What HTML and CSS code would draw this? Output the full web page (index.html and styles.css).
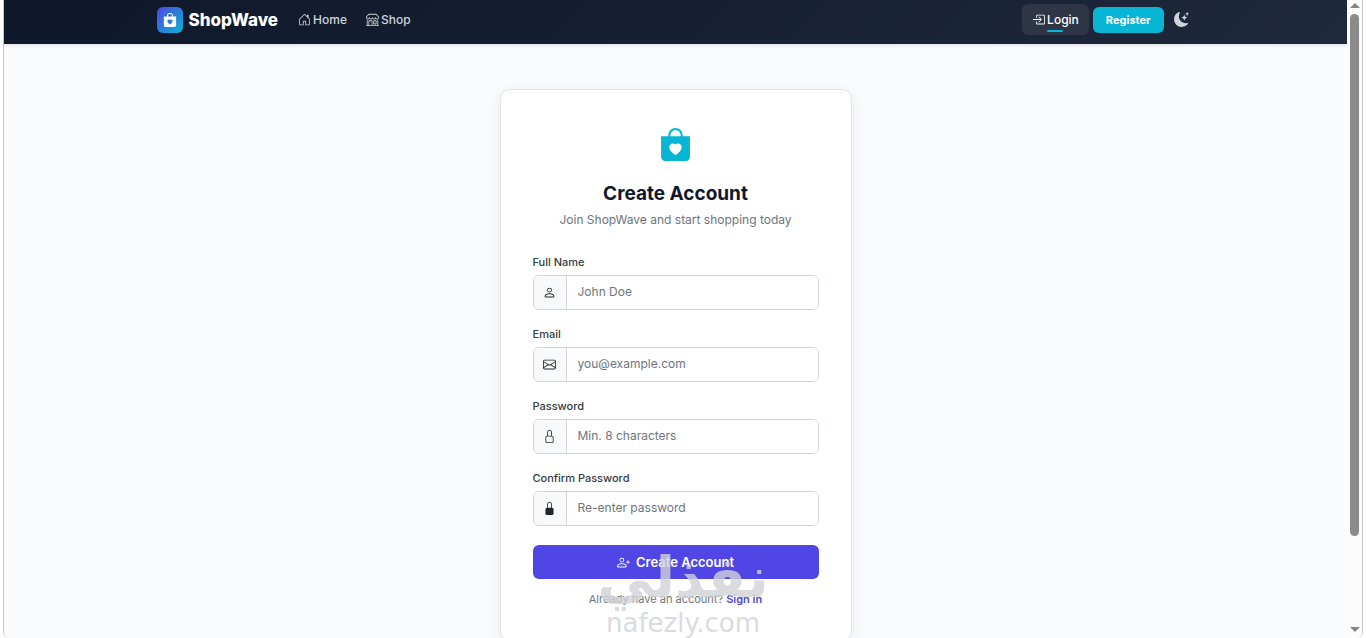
FILE: index.html
```
<!DOCTYPE html>
<html lang="en">
<head>
    <meta charset="UTF-8">
    <meta name="viewport" content="width=device-width, initial-scale=1.0">
    <title>Create Account - ShopWave</title>
    <link rel="stylesheet" href="styles.css">
</head>
<body>
    <div class="window">
        <div class="page">
            <nav class="navbar">
                <div class="container">
                    <a href="#" class="brand">
                        <span class="brand-icon">
                            <svg viewBox="0 0 16 16"><path d="M11.5 4v-.5a3.5 3.5 0 1 0-7 0V4H1v10a2 2 0 0 0 2 2h10a2 2 0 0 0 2-2V4zM8 1a2.5 2.5 0 0 1 2.5 2.5V4h-5v-.5A2.5 2.5 0 0 1 8 1m0 6.993c1.664-1.711 5.825 1.283 0 5.132-5.825-3.85-1.664-6.843 0-5.132"/></svg>
                        </span>
                        ShopWave
                    </a>
                    <div class="nav-links">
                        <a href="#" class="nav-link">
                            <svg viewBox="0 0 16 16"><path d="M8.354 1.146a.5.5 0 0 0-.708 0l-6 6A.5.5 0 0 0 1.5 7.5v7a.5.5 0 0 0 .5.5h4.5a.5.5 0 0 0 .5-.5v-4h2v4a.5.5 0 0 0 .5.5H14a.5.5 0 0 0 .5-.5v-7a.5.5 0 0 0-.146-.354L13 5.793V2.5a.5.5 0 0 0-.5-.5h-1a.5.5 0 0 0-.5.5v1.293zM2.5 14V7.707l5.5-5.5 5.5 5.5V14H10v-4a.5.5 0 0 0-.5-.5h-3a.5.5 0 0 0-.5.5v4z"/></svg>
                            Home
                        </a>
                        <a href="#" class="nav-link">
                            <svg viewBox="0 0 16 16"><path d="M2.97 1.35A1 1 0 0 1 3.73 1h8.54a1 1 0 0 1 .76.35l2.609 3.044A1.5 1.5 0 0 1 16 5.37v.255a2.375 2.375 0 0 1-4.25 1.458A2.37 2.37 0 0 1 9.875 8 2.37 2.37 0 0 1 8 7.083 2.37 2.37 0 0 1 6.125 8a2.37 2.37 0 0 1-1.875-.917A2.375 2.375 0 0 1 0 5.625V5.37a1.5 1.5 0 0 1 .361-.976zm1.78 4.275a1.375 1.375 0 0 0 2.75 0 .5.5 0 0 1 1 0 1.375 1.375 0 0 0 2.75 0 .5.5 0 0 1 1 0 1.375 1.375 0 1 0 2.75 0V5.37a.5.5 0 0 0-.12-.325L12.27 2H3.73L1.12 5.045A.5.5 0 0 0 1 5.37v.255a1.375 1.375 0 0 0 2.75 0 .5.5 0 0 1 1 0M1.5 8.5A.5.5 0 0 1 2 9v6h1v-5a1 1 0 0 1 1-1h3a1 1 0 0 1 1 1v5h6V9a.5.5 0 0 1 1 0v6h.5a.5.5 0 0 1 0 1H.5a.5.5 0 0 1 0-1H1V9a.5.5 0 0 1 .5-.5M4 15h3v-5H4zm5-5a1 1 0 0 1 1-1h2a1 1 0 0 1 1 1v3a1 1 0 0 1-1 1h-2a1 1 0 0 1-1-1zm3 0h-2v3h2z"/></svg>
                            Shop
                        </a>
                    </div>
                    <div class="nav-actions">
                        <a href="#" class="nav-link login-link">
                            <svg viewBox="0 0 16 16"><path d="M6 3.5a.5.5 0 0 1 .5-.5h8a.5.5 0 0 1 .5.5v9a.5.5 0 0 1-.5.5h-8a.5.5 0 0 1-.5-.5v-2a.5.5 0 0 0-1 0v2A1.5 1.5 0 0 0 6.5 14h8a1.5 1.5 0 0 0 1.5-1.5v-9A1.5 1.5 0 0 0 14.5 2h-8A1.5 1.5 0 0 0 5 3.5v2a.5.5 0 0 0 1 0z"/><path d="M11.854 8.354a.5.5 0 0 0 0-.708l-3-3a.5.5 0 1 0-.708.708L10.293 7.5H1.5a.5.5 0 0 0 0 1h8.793l-2.147 2.146a.5.5 0 0 0 .708.708z"/></svg>
                            Login
                        </a>
                        <a href="#" class="register-btn">Register</a>
                        <button type="button" class="theme-btn" aria-label="Toggle dark mode">
                            <svg viewBox="0 0 16 16"><path d="M6 .278a.77.77 0 0 1 .08.858 7.2 7.2 0 0 0-.878 3.46c0 4.021 3.278 7.277 7.318 7.277q.792-.001 1.533-.16a.79.79 0 0 1 .81.316.73.73 0 0 1-.031.893A8.35 8.35 0 0 1 8.344 16C3.734 16 0 12.286 0 7.71 0 4.266 2.114 1.312 5.124.06A.75.75 0 0 1 6 .278"/><path d="M10.794 3.148a.217.217 0 0 1 .412 0l.387 1.162c.173.518.579.924 1.097 1.097l1.162.387a.217.217 0 0 1 0 .412l-1.162.387a1.73 1.73 0 0 0-1.097 1.097l-.387 1.162a.217.217 0 0 1-.412 0l-.387-1.162A1.73 1.73 0 0 0 9.31 6.593l-1.162-.387a.217.217 0 0 1 0-.412l1.162-.387a1.73 1.73 0 0 0 1.097-1.097zM13.863.099a.145.145 0 0 1 .274 0l.258.774c.115.346.386.617.732.732l.774.258a.145.145 0 0 1 0 .274l-.774.258a1.16 1.16 0 0 0-.732.732l-.258.774a.145.145 0 0 1-.274 0l-.258-.774a1.16 1.16 0 0 0-.732-.732l-.774-.258a.145.145 0 0 1 0-.274l.774-.258c.346-.115.617-.386.732-.732z"/></svg>
                        </button>
                    </div>
                </div>
            </nav>

            <main class="content">
                <div class="card">
                    <div class="card-header">
                        <svg viewBox="0 0 16 16"><path d="M11.5 4v-.5a3.5 3.5 0 1 0-7 0V4H1v10a2 2 0 0 0 2 2h10a2 2 0 0 0 2-2V4zM8 1a2.5 2.5 0 0 1 2.5 2.5V4h-5v-.5A2.5 2.5 0 0 1 8 1m0 6.993c1.664-1.711 5.825 1.283 0 5.132-5.825-3.85-1.664-6.843 0-5.132"/></svg>
                        <h1>Create Account</h1>
                        <p>Join ShopWave and start shopping today</p>
                    </div>

                    <form>
                        <div class="form-group">
                            <label for="name">Full Name</label>
                            <div class="input-group">
                                <span class="input-icon"><svg viewBox="0 0 16 16"><path d="M8 8a3 3 0 1 0 0-6 3 3 0 0 0 0 6m2-3a2 2 0 1 1-4 0 2 2 0 0 1 4 0m4 8c0 1-1 1-1 1H3s-1 0-1-1 1-4 6-4 6 3 6 4m-1-.004c-.001-.246-.154-.986-.832-1.664C11.516 10.68 10.289 10 8 10s-3.516.68-4.168 1.332c-.678.678-.83 1.418-.832 1.664z"/></svg></span>
                                <input type="text" id="name" placeholder="John Doe">
                            </div>
                        </div>
                        <div class="form-group">
                            <label for="email">Email</label>
                            <div class="input-group">
                                <span class="input-icon"><svg viewBox="0 0 16 16"><path d="M0 4a2 2 0 0 1 2-2h12a2 2 0 0 1 2 2v8a2 2 0 0 1-2 2H2a2 2 0 0 1-2-2zm2-1a1 1 0 0 0-1 1v.217l7 4.2 7-4.2V4a1 1 0 0 0-1-1zm13 2.383-4.708 2.825L15 11.105zm-.034 6.876-5.64-3.471L8 9.583l-1.326-.795-5.64 3.47A1 1 0 0 0 2 13h12a1 1 0 0 0 .966-.741M1 11.105l4.708-2.897L1 5.383z"/></svg></span>
                                <input type="email" id="email" placeholder="you@example.com">
                            </div>
                        </div>
                        <div class="form-group">
                            <label for="password">Password</label>
                            <div class="input-group">
                                <span class="input-icon"><svg viewBox="0 0 16 16"><path d="M8 1a2 2 0 0 1 2 2v4H6V3a2 2 0 0 1 2-2m3 6V3a3 3 0 0 0-6 0v4a2 2 0 0 0-2 2v5a2 2 0 0 0 2 2h6a2 2 0 0 0 2-2V9a2 2 0 0 0-2-2M5 8h6a1 1 0 0 1 1 1v5a1 1 0 0 1-1 1H5a1 1 0 0 1-1-1V9a1 1 0 0 1 1-1"/></svg></span>
                                <input type="password" id="password" placeholder="Min. 8 characters">
                            </div>
                        </div>
                        <div class="form-group">
                            <label for="confirm">Confirm Password</label>
                            <div class="input-group">
                                <span class="input-icon"><svg viewBox="0 0 16 16"><path d="M8 1a2 2 0 0 1 2 2v4H6V3a2 2 0 0 1 2-2m3 6V3a3 3 0 0 0-6 0v4a2 2 0 0 0-2 2v5a2 2 0 0 0 2 2h6a2 2 0 0 0 2-2V9a2 2 0 0 0-2-2"/></svg></span>
                                <input type="password" id="confirm" placeholder="Re-enter password">
                            </div>
                        </div>
                        <button type="submit" class="submit-btn">
                            <svg viewBox="0 0 16 16"><path d="M6 8a3 3 0 1 0 0-6 3 3 0 0 0 0 6m2-3a2 2 0 1 1-4 0 2 2 0 0 1 4 0m4 8c0 1-1 1-1 1H1s-1 0-1-1 1-4 6-4 6 3 6 4m-1-.004c-.001-.246-.154-.986-.832-1.664C9.516 10.68 8.289 10 6 10s-3.516.68-4.168 1.332c-.678.678-.83 1.418-.832 1.664z"/><path d="M13.5 5a.5.5 0 0 1 .5.5V7h1.5a.5.5 0 0 1 0 1H14v1.5a.5.5 0 0 1-1 0V8h-1.5a.5.5 0 0 1 0-1H13V5.5a.5.5 0 0 1 .5-.5"/></svg>
                            Create Account
                        </button>
                    </form>
                    <p class="signin">Already have an account? <a href="#">Sign in</a></p>
                </div>
            </main>
        </div>

        <div class="scrollbar">
            <span class="arrow-up"></span>
            <span class="thumb"></span>
            <span class="arrow-down"></span>
        </div>
    </div>

    <div class="watermark">
        <span class="watermark-ar" lang="ar" dir="rtl">نفذلي</span>
        <span class="watermark-en">nafezly.com</span>
    </div>
</body>
</html>
```
FILE: styles.css
```
* { box-sizing: border-box; }
body { margin: 0; font-family: Inter, sans-serif; font-size: 12px; color: #0f172a; background: #fff; height: 100vh; overflow: hidden; position: relative; }
a { text-decoration: none; }
svg { fill: currentColor; display: block; flex-shrink: 0; }

.window { display: flex; height: 100vh; margin: 0 3px; border: 1px solid #c4c6c8; border-top: none; border-bottom: none; border-radius: 0 0 6px 6px; overflow: hidden; }
.page { flex: 1; height: 100%; overflow: hidden; background: #f9fbfd; }

/* navbar */
.navbar { background: linear-gradient(135deg, #0f172a, #1e293b); padding: 4px 0 9px; box-shadow: 0 1px 4px rgba(15, 23, 42, 0.12); }
.container { display: flex; align-items: center; width: 90%; max-width: 1038px; margin: 0 auto; }
.brand { display: flex; align-items: center; gap: 6px; color: #fff; font-size: 17px; font-weight: 800; }
.brand-icon { display: flex; align-items: center; justify-content: center; width: 26px; height: 26px; border-radius: 6px; background: linear-gradient(135deg, #4f46e5, #06b6d4); }
.brand-icon svg { width: 14px; height: 14px; }
.nav-links { display: flex; margin-left: 10px; }
.nav-link { display: flex; align-items: center; gap: 2px; height: 31px; padding: 0 10px; color: #cfd3da; font-weight: 500; }
.nav-link svg { width: 13px; height: 13px; }
.nav-links .nav-link + .nav-link { padding-left: 9px; }
.nav-actions { display: flex; align-items: center; margin-left: auto; }
.login-link { position: relative; color: #fff; background: #2d3546; border-radius: 6px; }
.login-link::after { content: ""; position: absolute; left: 50%; bottom: 3px; width: 16px; height: 2px; margin-left: -8px; background: #06b6d4; border-radius: 1px; }
.register-btn { margin-left: 4px; padding: 5px 13px; font-size: 11px; line-height: 16px; color: #fff; font-weight: 700; background: #06b6d4; border-radius: 6px; }
.theme-btn { margin-left: 4px; padding: 6px; border: none; background: none; color: #cfd3da; cursor: pointer; }
.theme-btn svg { width: 15px; height: 15px; }

/* register card */
.content { padding: 45px 16px; }
.card { max-width: 352px; margin: 0 auto; padding: 38px 32px 32px; background: #fff; border: 1px solid #dfe4ea; border-radius: 10px; box-shadow: 0 4px 16px rgba(15, 23, 42, 0.07); }
.card-header { text-align: center; margin-bottom: 24px; }
.card-header svg { width: 33px; height: 33px; margin: 0 auto; color: #06b6d4; }
.card-header h1 { margin: 20px 0 4px; font-size: 19px; line-height: 26px; font-weight: 700; }
.card-header p { margin: 0; line-height: 18px; color: #6c757d; }
.form-group { margin-bottom: 15px; }
.form-group label { display: block; margin-bottom: 4px; font-size: 11px; line-height: 18px; font-weight: 500; color: #333b45; }
.input-group { display: flex; height: 35px; border: 1px solid #cfd5dc; border-radius: 6px; overflow: hidden; }
.input-icon { display: flex; align-items: center; justify-content: center; width: 33px; color: #212529; background: #f8f9fb; border-right: 1px solid #cfd5dc; }
.input-icon svg { width: 13px; height: 13px; }
.input-group input { flex: 1; min-width: 0; padding: 0 11px 2px; border: none; outline: none; font-family: inherit; font-size: 12px; background: #fff; }
.input-group input::placeholder { color: #6c757d; }
.submit-btn { display: flex; align-items: center; justify-content: center; gap: 6px; width: 100%; height: 34px; margin-top: 19px; border: none; border-radius: 6px; background: #4f46e5; color: #fff; font-family: inherit; font-size: 13px; font-weight: 600; cursor: pointer; }
.submit-btn svg { width: 13px; height: 13px; }
.signin { margin: 11px 0 0; text-align: center; font-size: 11px; line-height: 18px; color: #6c757d; }
.signin a { color: #4f46e5; font-weight: 600; }

/* scrollbar */
.scrollbar { display: flex; flex-direction: column; align-items: center; width: 15px; padding: 3px 0 6px; background: #fcfcfc; }
.arrow-up, .arrow-down { border-left: 5px solid transparent; border-right: 5px solid transparent; }
.arrow-up { border-bottom: 5px solid #858585; }
.arrow-down { border-top: 5px solid #858585; margin-top: auto; }
.thumb { width: 9px; height: 83%; margin-top: 6px; background: #8b8b8b; border-radius: 5px; }

/* watermark */
.watermark { position: absolute; left: 50%; bottom: 0; transform: translateX(-50%); display: flex; flex-direction: column; align-items: center; color: #d2d3d8; opacity: 0.8; pointer-events: none; }
.watermark-ar { font-family: "DejaVu Sans", sans-serif; font-size: 56px; font-weight: 700; line-height: 60px; }
.watermark-en { font-family: "DejaVu Sans", sans-serif; font-size: 26px; line-height: 30px; }
```
